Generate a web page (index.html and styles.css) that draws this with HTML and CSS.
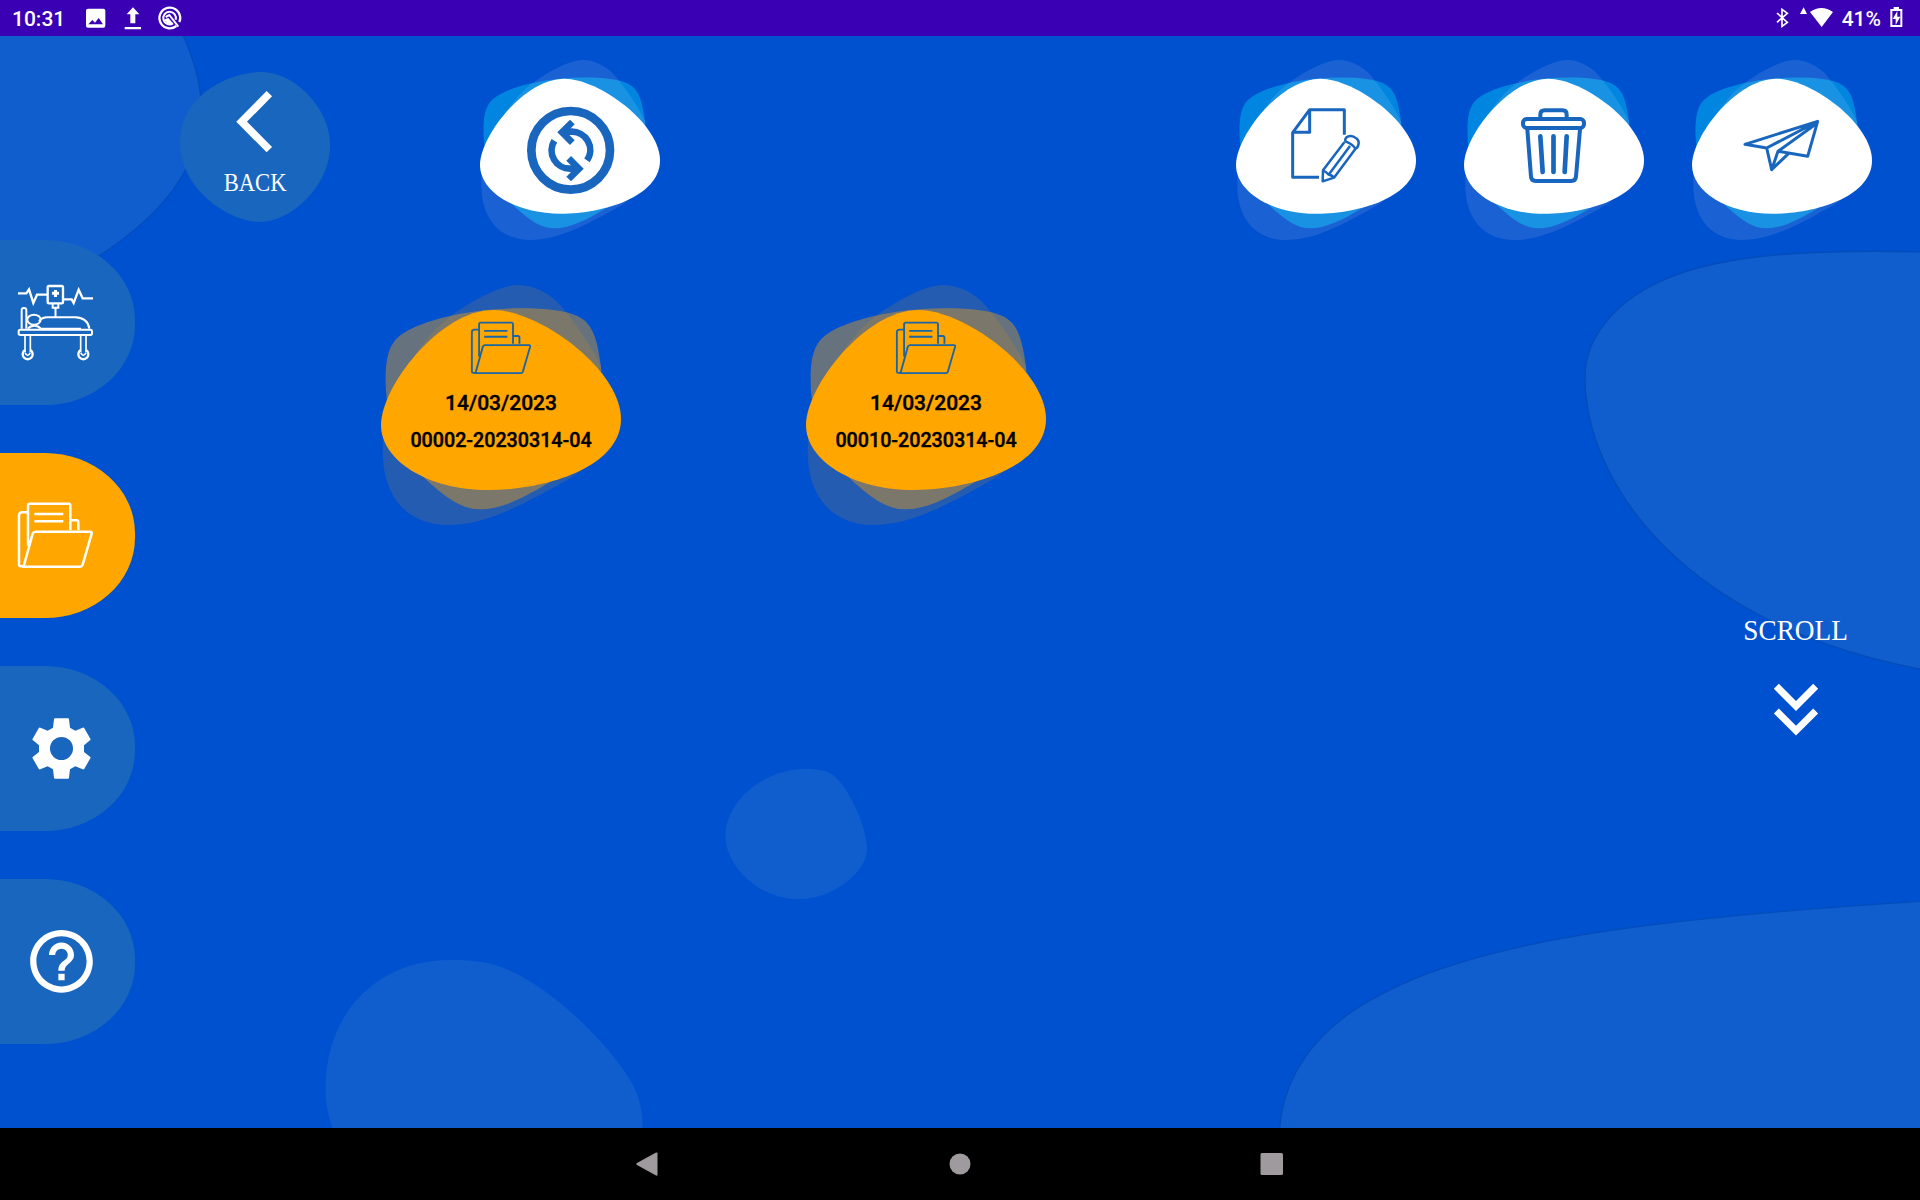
FILE: index.html
```html
<!DOCTYPE html>
<html lang="en">
<head>
<meta charset="utf-8">
<title>Folders</title>
<link rel="stylesheet" href="styles.css">
</head>
<body>
<svg class="defs" width="0" height="0" aria-hidden="true">
  <defs>
    <symbol id="blob" viewBox="63 45 720 720">
      <path class="blob-mid" d="M77 330C77 250 92 215 130 190C190 150 330 115 480 115C560 115 620 123 652 138C700 160 712 210 723 290C725 420 640 600 570 636C480 690 420 718 360 718C310 718 265 690 200 630C120 560 75 430 77 330Z"/>
      <path class="blob-faint" d="M475 45C520 45 570 70 600 105C640 150 700 235 722 290C790 480 700 590 610 636C480 710 370 765 265 765C150 765 68 690 68 540C68 420 150 230 270 140C330 95 420 45 475 45Z"/>
      <path class="blob-main" d="M400 120C540 120 783 300 783 447C783 590 560 660 385 660C200 660 63 570 63 465C63 350 240 120 400 120Z"/>
    </symbol>
    <symbol id="folder" viewBox="50 185 232 202">
      <path d="M70 379H62Q57 379 57 373V227Q57 217 67 217H83M84 318V197Q84 191 90 191H206Q211 191 211 197V270M212 241H229Q235 241 235 247V270M71 379L98 281Q101 275 107 275H271Q276 275 275 281L248 374Q246 380 241 380H66M103 222H190M103 244H190"/>
    </symbol>
  </defs>
</svg>

<header class="status">
  <span class="status-text">10:31</span>
  <svg class="status-left" width="100" height="36" viewBox="255 0 300 108">
    <path class="solid" fill-rule="evenodd" d="M264 26H310Q316 26 316 32V77Q316 83 310 83H264Q258 83 258 77V32Q258 26 264 26ZM265 73H309L296 54L285 68L277 60Z"/>
    <path class="solid" d="M399 22L418 43H406V70H391V43H380ZM374 81H423V88H374Z"/>
    <path class="line" d="M529 78A31 31 0 1 1 538 66" stroke-width="7"/>
    <path class="line" d="M519 70A19 19 0 1 1 527 59M497 51L508 45L535 80" stroke-width="6"/>
    <path class="solid" d="M493 58L505 54L520 71Q498 76 493 58Z"/>
  </svg>
  <svg class="status-right" width="66" height="36" viewBox="270 0 198 108">
    <path class="line" d="M291 39L322 67L306 79V28L322 40L291 67" stroke-width="5"/>
    <path class="solid" d="M371 22L381 42H360ZM390 36Q424 12 459 36L425 81Z"/>
  </svg>
  <span class="status-text">41%</span>
  <svg class="battery" width="13" height="36" viewBox="629 0 39 108">
    <path class="line" d="M633 30H663V78H633Z" stroke-width="6"/>
    <path class="solid" d="M640 21H656V30H640ZM651 33L637 57H646V75L660 50H651Z"/>
  </svg>
</header>

<main class="screen">
  <svg class="backdrop" viewBox="0 36 1920 1092" aria-hidden="true">
    <path class="edge" d="M-5 30H181C194 60 202 85 201 110C200 130 194 150 186 169C170 200 140 228 108 250L-5 320Z"/>
    <path class="edge" d="M1925 252C1780 248 1680 258 1626 302C1598 325 1585 350 1585 377C1585 480 1680 625 1925 670Z"/>
    <path d="M725.5 836C726 800 765 769 805 769C815 769 824 770 830 773C848 783 868 830 867 850C867 870 835 899 799 899C755 899 725 862 725.5 836Z"/>
    <path d="M332.500 1128C327 1112 325.600 1100 325.600 1087C326 1015 375 960 451 960C467 960 482 961 495 965C538 978 598 1030 629 1078C638 1093 643 1108 642.500 1128Z"/>
    <path class="edge" d="M1279.500 1132C1281 1095 1298 1050 1350 1013C1450 945 1620 920 1925 901V1132Z"/>
  </svg>

  <nav class="sidebar">
    <a class="tab">
      <svg viewBox="0 30 405 495">
        <g class="line" stroke-width="7">
          <path d="M54 190H79L87 178L100 219L111 194H141M191 208H215L221 219L236 179L248 205H279"/>
          <rect x="143" y="168" width="46" height="52" rx="4"/>
          <path d="M156 190H177M166.500 180V201" stroke-width="9"/>
          <path d="M158 222V233H175V222M166.500 234V262" stroke-width="6"/>
          <path d="M65 296V240Q65 234 72 234Q79 234 79 240V296" stroke-width="6"/>
          <ellipse cx="102" cy="269" rx="20" ry="15" stroke-width="6"/>
          <path d="M84 296Q90 287 103 287Q116 287 122 296M117 274Q126 262 142 262H226Q264 264 268 296M122 296H243" stroke-width="6"/>
          <rect x="56" y="299" width="220" height="16" rx="5" stroke-width="6"/>
          <path d="M75 318V366M91 318V366M242 318V366M258 318V366" stroke-width="5"/>
          <path d="M75 360A15 15 0 1 0 91 360M242 360A15 15 0 1 0 258 360" stroke-width="7"/>
          <path d="M75 368Q83 384 91 368M242 368Q250 384 258 368" stroke-width="5"/>
        </g>
      </svg>
    </a>
    <a class="tab tab-active">
      <svg viewBox="0 39 405 495"><use class="line" href="#folder" x="50" y="185" width="232" height="202" stroke-width="7.500"/></svg>
    </a>
    <a class="tab">
      <svg viewBox="0 18 405 495">
        <path class="solid" fill-rule="evenodd" d="M165 175H204Q207 175 207 178L210 203L226 212L248 203Q251 202 253 205L271 236Q273 239 270 241L252 256V276L270 290Q273 292 271 295L253 326Q251 329 248 328L226 319L210 328L207 353Q207 356 204 356H165Q162 356 162 353L159 328L143 319L121 328Q118 329 116 326L98 295Q96 292 99 290L117 276V256L99 241Q96 239 98 236L116 205Q118 202 121 203L143 212L159 203L162 178Q162 175 165 175ZM184.500 231A34.500 34.500 0 1 0 184.500 300A34.500 34.500 0 1 0 184.500 231Z"/>
      </svg>
    </a>
    <a class="tab">
      <svg viewBox="0 657 405 495">
        <path class="solid" transform="translate(71.700 791.200) scale(9.400)" d="M11 18h2v-2h-2v2zm1-16C6.480 2 2 6.480 2 12s4.480 10 10 10 10-4.480 10-10S17.520 2 12 2zm0 18c-4.410 0-8-3.590-8-8s3.590-8 8-8 8 3.590 8 8-3.590 8-8 8zm0-14c-2.210 0-4 1.790-4 4h2c0-1.100.9-2 2-2s2 .9 2 2c0 2-3 1.750-3 5h2c0-2.250 3-2.500 3-5 0-2.210-1.790-4-4-4z"/>
      </svg>
    </a>
  </nav>

  <section class="content">
    <div class="toolbar">
      <a class="back">
        <svg viewBox="540 215 450 450">
          <path class="back-shape" d="M785 215C880 215 990 320 990 435C990 560 870 665 780 665C690 665 540 570 540 425C540 290 680 215 785 215Z"/>
          <path class="line" d="M808 280L725 364L808 448" stroke-width="23"/>
        </svg>
        <span class="back-label">BACK</span>
      </a>
      <a class="action action-refresh">
        <svg class="shape"><use href="#blob"/></svg>
        <svg class="glyph" viewBox="60 60 540 540">
          <circle cx="332" cy="331" r="118" stroke-width="26"/>
          <path d="M381 361A55 55 0 0 0 332 275H308M283 302A55 55 0 0 0 332 386H356" stroke-width="20"/>
          <path d="M337 246L306 277L337 308M326 355L357 386L326 417" stroke-width="20"/>
        </svg>
      </a>
      <div class="actions">
        <a class="action">
          <svg class="shape"><use href="#blob"/></svg>
          <svg class="glyph" viewBox="48 60 540 540">
            <g stroke-width="9" stroke-linejoin="round">
              <path d="M373 284V209H269L218 278V412H297M269 209V277H218"/>
              <path stroke-width="7.500" d="M373 307L309 391L308 424L342 413L406 327M390 318L327 403M309 391Q318 395 326 404Q335 404 342 413M376 304Q374 290 390 288Q400 287 409 295Q419 303 415 315Q411 327 405 325Q401 314 376 304Z"/>
            </g>
          </svg>
        </a>
        <a class="action">
          <svg class="shape"><use href="#blob"/></svg>
          <svg class="glyph" viewBox="42 60 540 540">
            <g stroke-width="12" stroke-linecap="round">
              <rect x="219" y="237" width="183" height="27" rx="11"/>
              <path d="M271 235V224Q271 211 284 211H338Q350 211 350 224V235M232 268L243 410Q244 423 257 423H364Q377 423 378 410L390 268"/>
              <path d="M271 289L278 396M310.500 289V396M350 289L344 396" stroke-width="14"/>
            </g>
          </svg>
        </a>
        <a class="action">
          <svg class="shape"><use href="#blob"/></svg>
          <svg class="glyph" viewBox="36 180 540 540">
            <path stroke-width="9" stroke-linejoin="round" d="M413 364L195 433L260 444L275 509L294 454L383 469ZM413 364L260 444M413 368L294 454M275 509L326 460"/>
          </svg>
        </a>
      </div>
    </div>

    <div class="board">
      <div class="cards">
        <article class="card">
          <svg class="shape"><use href="#blob"/></svg>
          <div class="card-body">
            <svg class="card-icon"><use href="#folder" stroke-width="7"/></svg>
            <span class="card-date">14/03/2023</span>
            <span class="card-code">00002-20230314-04</span>
          </div>
        </article>
        <article class="card">
          <svg class="shape"><use href="#blob"/></svg>
          <div class="card-body">
            <svg class="card-icon"><use href="#folder" stroke-width="7"/></svg>
            <span class="card-date">14/03/2023</span>
            <span class="card-code">00010-20230314-04</span>
          </div>
        </article>
      </div>
      <div class="scroll">
        <span class="scroll-label">SCROLL</span>
        <svg width="46" height="54" viewBox="639 1359 138 162">
          <path class="line" d="M649 1369L708 1428L767 1369M649 1443L708 1502L767 1443" stroke-width="21"/>
        </svg>
      </div>
    </div>
  </section>
</main>

<footer class="navbar">
  <svg class="nav-icon" viewBox="0 0 24 24"><path d="M20 0.500Q21.500 0 21.500 1.500V22.500Q21.500 24 20 23.500L1 13Q-0.500 12 1 11Z"/></svg>
  <svg class="nav-icon" viewBox="0 0 24 24"><circle cx="12" cy="12" r="10.500"/></svg>
  <svg class="nav-icon" viewBox="0 0 24 24"><rect x="0.500" y="1" width="22.500" height="22" rx="1.500"/></svg>
</footer>
</body>
</html>
```

FILE: styles.css
```css
* { box-sizing: border-box; }

body {
  margin: 0;
  width: 1920px;
  height: 1200px;
  display: flex;
  flex-direction: column;
  overflow: hidden;
  background: #000;
  color: #fff;
  font-family: Roboto, sans-serif;
}

svg { display: block; }
.defs { position: absolute; }
.solid { fill: #fff; }
.line { fill: none; stroke: #fff; }

.status {
  height: 36px;
  display: flex;
  align-items: center;
  padding: 0 17px 0 12px;
  background: #3a00b3;
}
.status-text { font-size: 21px; font-weight: 500; line-height: 36px; padding-top: 1px; }
.status-left { margin-left: 20px; margin-right: auto; }
.status-right { margin-right: 6px; }
.battery { margin-left: 9px; }

.screen {
  position: relative;
  height: 1092px;
  display: flex;
  background: #0051d0;
}
.backdrop {
  position: absolute;
  inset: 0;
  width: 1920px;
  height: 1092px;
  fill: #105ece;
}
.edge { stroke: #044cba; stroke-width: 1.3px; }

.sidebar {
  position: relative;
  width: 135px;
  padding-top: 204px;
  display: flex;
  flex-direction: column;
  gap: 48px;
}
.tab {
  width: 135px;
  height: 165px;
  background: #1966be;
  border-radius: 0 90px 90px 0 / 0 80px 80px 0;
}
.tab-active { background: #ffa600; }

.content {
  position: relative;
  flex: 1;
  display: flex;
  flex-direction: column;
}
.toolbar {
  height: 204px;
  display: flex;
  align-items: flex-start;
  padding: 24px 48px 0 45px;
}
.back {
  display: grid;
  width: 150px;
  height: 150px;
  margin-top: 12px;
}
.back > * { grid-area: 1 / 1; }
.back-shape { fill: #1966be; }
.back-label {
  align-self: end;
  justify-self: center;
  margin: 0 0 24px 1px;
  font: 26px/30px "Liberation Serif", serif;
  transform: scaleX(0.87);
}
.action { display: grid; width: 180px; height: 180px; }
.action > * { grid-area: 1 / 1; }
.action-refresh { margin-left: 150px; }
.actions { display: flex; gap: 48px; margin-left: auto; }
.shape { width: 100%; height: 100%; }
.action .shape { --main: #fff; --mid: #0086e0; --faint: rgba(255, 255, 255, 0.1); }
.blob-main { fill: var(--main); }
.blob-mid { fill: var(--mid); }
.blob-faint { fill: var(--faint); }
.glyph { fill: none; stroke: #1966be; width: 100%; height: 100%; }

.board { flex: 1; display: flex; }
.cards {
  flex: 1;
  display: flex;
  align-items: flex-start;
  gap: 185px;
  padding: 45px 0 0 246px;
}
.card { display: grid; width: 240px; height: 240px; color: #000; }
.card > * { grid-area: 1 / 1; }
.card .shape { --main: #ffa600; --mid: rgba(255, 165, 0, 0.4); --faint: rgba(255, 165, 0, 0.14); }
.card-body {
  display: flex;
  flex-direction: column;
  align-items: center;
  padding-top: 36px;
}
.card-icon { width: 62px; height: 54px; fill: none; stroke: #1966a6; }
.card-date, .card-code {
  font-weight: 500;
  line-height: 37px;
  white-space: nowrap;
  -webkit-text-stroke: 0.4px #000;
}
.card-date { margin-top: 10px; font-size: 21px; }
.card-code { font-size: 19.7px; }

.scroll {
  width: 248px;
  padding-top: 372px;
  display: flex;
  flex-direction: column;
  align-items: center;
}
.scroll-label {
  font: 29px/36px "Liberation Serif", serif;
  transform: scaleX(0.94);
}
.scroll svg { margin-top: 35px; }

.navbar {
  height: 72px;
  display: flex;
  align-items: center;
  justify-content: center;
  gap: 288px;
  background: #000;
}
.nav-icon { width: 24px; height: 24px; fill: #9e9a9e; }
```
